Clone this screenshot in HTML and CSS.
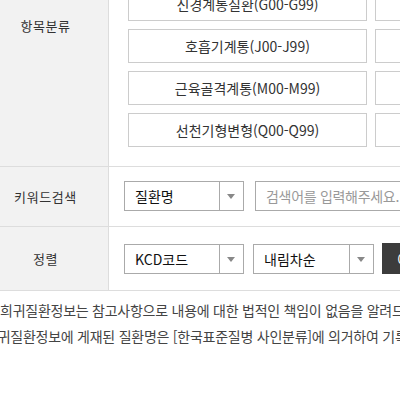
FILE: index.html
```html
<!DOCTYPE html>
<html lang="ko">
<head>
    <meta charset="UTF-8">
    <title>희귀질환 검색</title>
    <link rel="stylesheet" href="styles.css">
</head>
<body>
    <div class="search-box">
        <div class="row row-cat">
            <div class="row-head">항목분류</div>
            <div class="row-body cat-grid">
                <button class="cat-btn">감염성질환(A00-B99)</button>
                <button class="cat-btn">신생물(C00-D48)</button>
                <button class="cat-btn">혈액질환(D50-D89)</button>
                <button class="cat-btn">내분비질환(E00-E90)</button>
                <button class="cat-btn">정신질환(F00-F99)</button>
                <button class="cat-btn">눈질환(H00-H59)</button>
                <button class="cat-btn">신경계통질환(G00-G99)</button>
                <button class="cat-btn">귀질환(H60-H95)</button>
                <button class="cat-btn">순환기계통(I00-I99)</button>
                <button class="cat-btn">호흡기계통(J00-J99)</button>
                <button class="cat-btn">소화기계통(K00-K93)</button>
                <button class="cat-btn">피부질환(L00-L99)</button>
                <button class="cat-btn">근육골격계통(M00-M99)</button>
                <button class="cat-btn">비뇨생식계통(N00-N99)</button>
                <button class="cat-btn">임신출산(O00-O99)</button>
                <button class="cat-btn">선천기형변형(Q00-Q99)</button>
                <button class="cat-btn">주산기질환(P00-P96)</button>
                <button class="cat-btn">기타(R00-Z99)</button>
            </div>
        </div>
        <div class="row row-keyword">
            <div class="row-head">키워드검색</div>
            <div class="row-body form-line">
                <div class="select">
                    <span class="select-text">질환명</span>
                    <span class="select-arrow"></span>
                </div>
                <input class="keyword" type="text" placeholder="검색어를 입력해주세요.">
            </div>
        </div>
        <div class="row row-sort">
            <div class="row-head">정렬</div>
            <div class="row-body form-line">
                <div class="select">
                    <span class="select-text">KCD코드</span>
                    <span class="select-arrow"></span>
                </div>
                <div class="select select-order">
                    <span class="select-text">내림차순</span>
                    <span class="select-arrow"></span>
                </div>
                <button class="btn-dark">이동</button>
            </div>
        </div>
    </div>
    <div class="notes">
        <p class="note note-first">희귀질환정보는 참고사항으로 내용에 대한 법적인 책임이 없음을 알려드립니다.</p>
        <p class="note">희귀질환정보에 게재된 질환명은 [한국표준질병 사인분류]에 의거하여 기록하였습니다.</p>
    </div>
</body>
</html>
```

FILE: styles.css
```css
html, body {
    margin: 0;
    overflow: hidden;
}
body {
    font-family: "Noto Sans CJK KR", "Noto Sans", sans-serif;
    color: #333;
    background: #fff;
}
.search-box {
    margin: -116px 0 0 -17px;
    width: 900px;
}
.row {
    display: flex;
    border-bottom: 1px solid #ddd;
}
.row-head {
    width: 125px;
    flex-shrink: 0;
    background: #f2f2f2;
    border-right: 1px solid #ddd;
    display: flex;
    align-items: center;
    justify-content: center;
    font-size: 13px;
    letter-spacing: 0.6px;
    color: #333;
}
.cat-grid {
    display: grid;
    grid-template-columns: repeat(3, 239px);
    grid-auto-rows: 34px;
    gap: 8px;
    padding: 19px;
}
.cat-btn {
    box-sizing: border-box;
    border: 1px solid #ccc;
    background: #fff;
    font-family: inherit;
    font-size: 14px;
    color: #333;
    padding: 0;
}
.form-line {
    display: flex;
    align-items: center;
    padding: 14px 15px 15px;
}
.row-sort .form-line {
    padding: 16px 15px;
}
.select {
    box-sizing: border-box;
    width: 120px;
    height: 30px;
    border: 1px solid #aaa;
    display: flex;
    background: #fff;
}
.select-order {
    width: 121px;
    margin-left: 9px;
}
.select-text {
    flex: 1;
    padding-left: 10px;
    font-size: 14px;
    line-height: 28px;
    color: #111;
}
.select-arrow {
    width: 23px;
    border-left: 1px solid #aaa;
    position: relative;
}
.select-arrow::after {
    content: "";
    position: absolute;
    left: 7px;
    top: 12px;
    border-top: 5px solid #888;
    border-left: 4px solid transparent;
    border-right: 4px solid transparent;
}
.keyword {
    box-sizing: border-box;
    width: 300px;
    height: 30px;
    margin-left: 11px;
    border: 1px solid #aaa;
    padding: 0 10px;
    font-family: inherit;
    font-size: 14px;
    letter-spacing: -0.3px;
    outline: none;
}
.keyword::placeholder {
    color: #999;
}
.btn-dark {
    height: 31px;
    margin-left: 8px;
    padding: 0 15px;
    border: 0;
    background: #3c3c3c;
    color: #fff;
    font-family: inherit;
    font-size: 14px;
}
.notes {
    margin: 6px 0 0 -15px;
    width: 800px;
}
.note {
    margin: 0;
    font-size: 14px;
    line-height: 26px;
    letter-spacing: -0.25px;
    color: #444;
    white-space: nowrap;
}
.note-first {
    text-indent: 15px;
}
```
